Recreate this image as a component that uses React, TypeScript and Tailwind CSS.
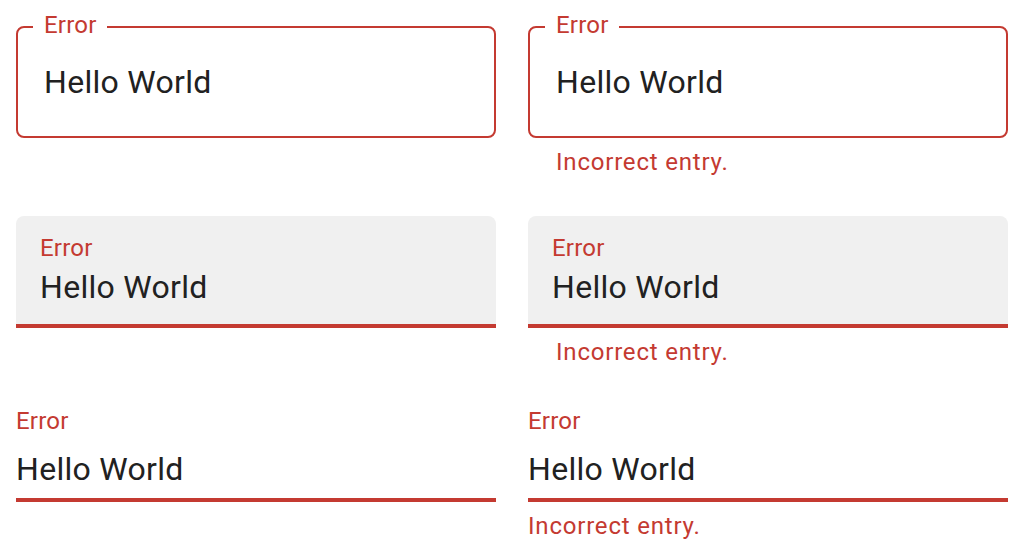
import React from 'react';

const ERR = 'text-[#c43a31]';

interface FieldProps {
  helper?: boolean;
}

const Helper: React.FC<{ className?: string }> = ({ className = '' }) => (
  <div className={`mt-3 text-[24px] leading-none tracking-[0.8px] ${ERR} ${className}`}>Incorrect entry.</div>
);

const Outlined: React.FC<FieldProps> = ({ helper }) => (
  <div className="pt-[26px]">
    <div className="relative h-[112px] border-2 border-[#c43a31] rounded-[8px] flex items-center pl-[26px]">
      <span className={`absolute top-[-15px] left-[15px] bg-white pl-[11px] pr-[10px] text-[24px] leading-none tracking-[0.2px] ${ERR}`}>Error</span>
      <span className="text-[32px] leading-none tracking-[0.3px] text-[#212121]">Hello World</span>
    </div>
    {helper && <Helper className="ml-[28px]" />}
  </div>
);

const Filled: React.FC<FieldProps> = ({ helper }) => (
  <div className="pt-[26px]">
    <div className="h-[112px] bg-[#f0f0f0] rounded-t-[8px] border-b-4 border-[#c43a31] pl-6 pt-5 flex flex-col">
      <span className={`text-[24px] leading-none tracking-[0.2px] ${ERR}`}>Error</span>
      <span className="mt-[11px] text-[32px] leading-none tracking-[0.3px] text-[#212121]">Hello World</span>
    </div>
    {helper && <Helper className="ml-[28px]" />}
  </div>
);

const Standard: React.FC<FieldProps> = ({ helper }) => (
  <div className="pt-[29px]">
    <div className="flex flex-col border-b-4 border-[#c43a31] pb-[13px]">
      <span className={`text-[24px] leading-none tracking-[0.2px] ${ERR}`}>Error</span>
      <span className="mt-5 text-[32px] leading-none tracking-[0.3px] text-[#212121]">Hello World</span>
    </div>
    {helper && <Helper />}
  </div>
);

export default function App() {
  return (
    <div className="w-[1022px] h-[560px] bg-white pl-4 font-['Roboto',sans-serif] grid grid-cols-[480px_480px] grid-rows-[190px_190px_180px] gap-x-8">
      <Outlined />
      <Outlined helper />
      <Filled />
      <Filled helper />
      <Standard />
      <Standard helper />
    </div>
  );
}
